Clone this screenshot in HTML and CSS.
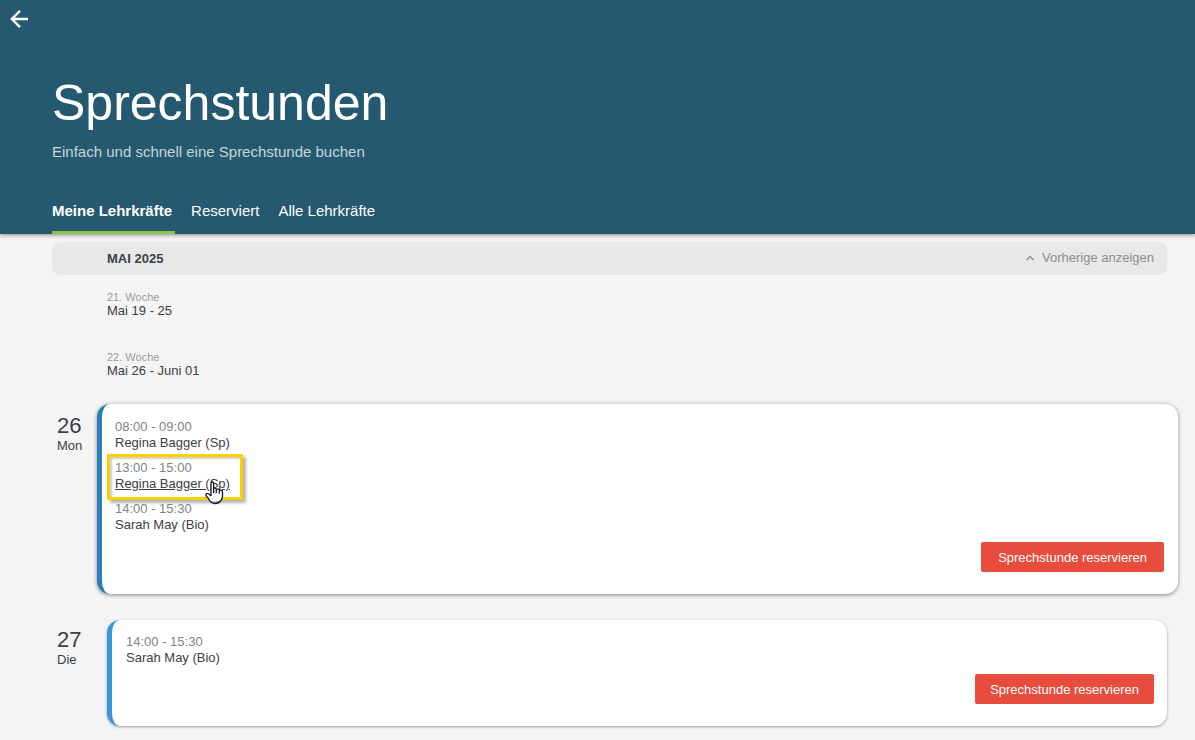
FILE: index.html
```html
<!DOCTYPE html>
<html lang="de">
<head>
  <meta charset="UTF-8">
  <title>Sprechstunden</title>
  <link rel="stylesheet" href="styles.css">
</head>
<body>

  <header class="header">
    <a class="back" href="#" aria-label="Zurück">
      <svg width="20" height="20" viewBox="0 0 20 20" fill="none" stroke="#fff" stroke-width="2.400">
        <path d="M19 10H3M11 1.800L2.800 10l8.200 8.200"/>
      </svg>
    </a>
    <h1>Sprechstunden</h1>
    <p class="subtitle">Einfach und schnell eine Sprechstunde buchen</p>
    <nav class="tabs">
      <a class="tab active" href="#">Meine Lehrkräfte</a>
      <a class="tab" href="#">Reserviert</a>
      <a class="tab" href="#">Alle Lehrkräfte</a>
    </nav>
  </header>

  <main class="content">
    <div class="month">
      <h2>MAI 2025</h2>
      <button class="previous" type="button">
        <svg width="8" height="6" viewBox="0 0 8 6" fill="none" stroke="#8b8e90" stroke-width="1.300">
          <path d="M0.500 5L4 1.500L7.500 5"/>
        </svg>
        Vorherige anzeigen
      </button>
    </div>

    <section class="week">
      <p class="week-number">21. Woche</p>
      <p>Mai 19 - 25</p>
    </section>
    <section class="week">
      <p class="week-number">22. Woche</p>
      <p>Mai 26 - Juni 01</p>
    </section>

    <section class="day">
      <div class="date">
        <p class="date-number">26</p>
        <p>Mon</p>
      </div>
      <div class="card raised">
        <ul class="slots">
          <li class="slot">
            <p class="time">08:00 - 09:00</p>
            <a href="#">Regina Bagger (Sp)</a>
          </li>
          <li class="slot marked">
            <p class="time">13:00 - 15:00</p>
            <a href="#">Regina Bagger (Sp)</a>
            <svg class="cursor" width="19" height="24" viewBox="0 0 19 24">
              <path d="M6 14V2.500Q6 1 7.300 1T8.600 2.500V7Q10.500 6 11.300 8Q13.500 7 14.300 9Q17.500 8.500 17.500 11V15Q17.500 17.500 16 20H4.500Q3 16.500 1.300 15Q.3 13 1.800 12.500Q3.500 12 6 15" fill="#fff"/>
              <path d="M6 15V2.500Q6 1 7.300 1T8.600 2.500V12M8.600 7.500Q11 6.500 11.300 8.500V12M11.300 8.500Q14 7 14.300 9.500V12.500M14.300 9.500Q17.500 8.500 17.500 11V15Q17.500 17.500 16 19.500Q13.500 22.500 10 22.500T4.500 19.500Q3 16.500 1.300 15Q.3 13 1.800 12.500Q3.500 12 6 15" fill="none" stroke="#0e1628" stroke-width="1.300"/>
            </svg>
          </li>
          <li class="slot">
            <p class="time">14:00 - 15:30</p>
            <a href="#">Sarah May (Bio)</a>
          </li>
        </ul>
        <button class="reserve" type="button">Sprechstunde reservieren</button>
      </div>
    </section>

    <section class="day">
      <div class="date">
        <p class="date-number">27</p>
        <p>Die</p>
      </div>
      <div class="card">
        <ul class="slots">
          <li class="slot">
            <p class="time">14:00 - 15:30</p>
            <a href="#">Sarah May (Bio)</a>
          </li>
        </ul>
        <button class="reserve" type="button">Sprechstunde reservieren</button>
      </div>
    </section>
  </main>

</body>
</html>
```
FILE: styles.css
```css
* {
  box-sizing: border-box;
}

body {
  margin: 0;
  background-color: #f4f4f4;
  color: #3b4045;
  font-family: "Liberation Sans", Arial, sans-serif;
  font-size: 13px;
  line-height: 16px;
}

h1, h2, p, ul {
  margin: 0;
  padding: 0;
  font-weight: normal;
}

a {
  color: inherit;
  text-decoration: none;
}

button {
  border: none;
  font-family: inherit;
  cursor: pointer;
}

.header {
  padding: 9px 28px 0 52px;
  background-color: #25596f;
  color: white;
  box-shadow: 0 1px 4px rgba(0, 0, 0, 0.45);
}

.back {
  display: block;
  width: 20px;
  height: 20px;
  margin-left: -43px;
}

.back svg {
  display: block;
}

h1 {
  margin-top: 44px;
  font-size: 50px;
  line-height: 60px;
}

.subtitle {
  margin-top: 9px;
  color: #c8d5db;
  font-size: 15px;
  line-height: 20px;
}

.tabs {
  display: flex;
  gap: 16px;
  margin-top: 39px;
}

.tab {
  height: 33px;
  padding-right: 3px;
  font-size: 15px;
  line-height: 20px;
}

.tab.active {
  border-bottom: 3px solid #8bc34a;
  font-weight: bold;
}

.content {
  padding: 8px 28px 14px 52px;
}

.month {
  display: flex;
  justify-content: space-between;
  align-items: center;
  height: 33px;
  padding: 0 13px 0 55px;
  background-color: #e8e8e8;
  border-radius: 8px;
}

.month h2 {
  font-size: 13px;
  font-weight: bold;
}

.previous {
  display: flex;
  align-items: center;
  gap: 8px;
  padding: 0 0 2px;
  background: none;
  color: #8b8e90;
  font-size: 13px;
}

.week {
  height: 60px;
  padding: 16px 0 0 55px;
}

.week-number {
  color: #9b9d9f;
  font-size: 11px;
  line-height: 12px;
}

.day {
  display: flex;
  margin-top: 11px;
}

.day + .day {
  margin-top: 28px;
}

.date {
  width: 55px;
  padding: 8px 0 0 5px;
}

.date-number {
  font-size: 22px;
  line-height: 24px;
}

.card {
  display: flex;
  flex: 1;
  flex-direction: column;
  gap: 8px;
  padding: 14px 13px 22px 14px;
  background-color: white;
  border-left: 5px solid #3498db;
  border-radius: 13px;
  box-shadow: 0 1px 3px rgba(0, 0, 0, 0.35);
}

.card.raised {
  gap: 9px;
  margin: -2px -11px -2px -10px;
  padding: 15px 14px 22px 13px;
  border-left-color: #2980b9;
  box-shadow: 0 1px 4px rgba(0, 0, 0, 0.45);
}

.slots {
  display: flex;
  flex-direction: column;
  gap: 9px;
  list-style-type: none;
}

.slot {
  position: relative;
  align-self: flex-start;
}

.slot a {
  display: block;
}

.time {
  color: #808386;
}

.marked {
  margin: -6px -8px -8px;
  padding: 3px 10px 5px 5px;
  border: 3px solid #fdd000;
  box-shadow: 3px 3px 3px rgba(0, 0, 0, 0.3), inset 2px 2px 2px rgba(0, 0, 0, 0.2);
}

.marked a {
  text-decoration: underline;
}

.cursor {
  position: absolute;
  right: 16px;
  bottom: -8px;
}

.reserve {
  align-self: flex-end;
  height: 30px;
  padding: 0 15px;
  background-color: #e84c3d;
  border-radius: 2px;
  color: white;
  font-size: 13px;
}

.raised .reserve {
  padding: 0 17px;
}
```
